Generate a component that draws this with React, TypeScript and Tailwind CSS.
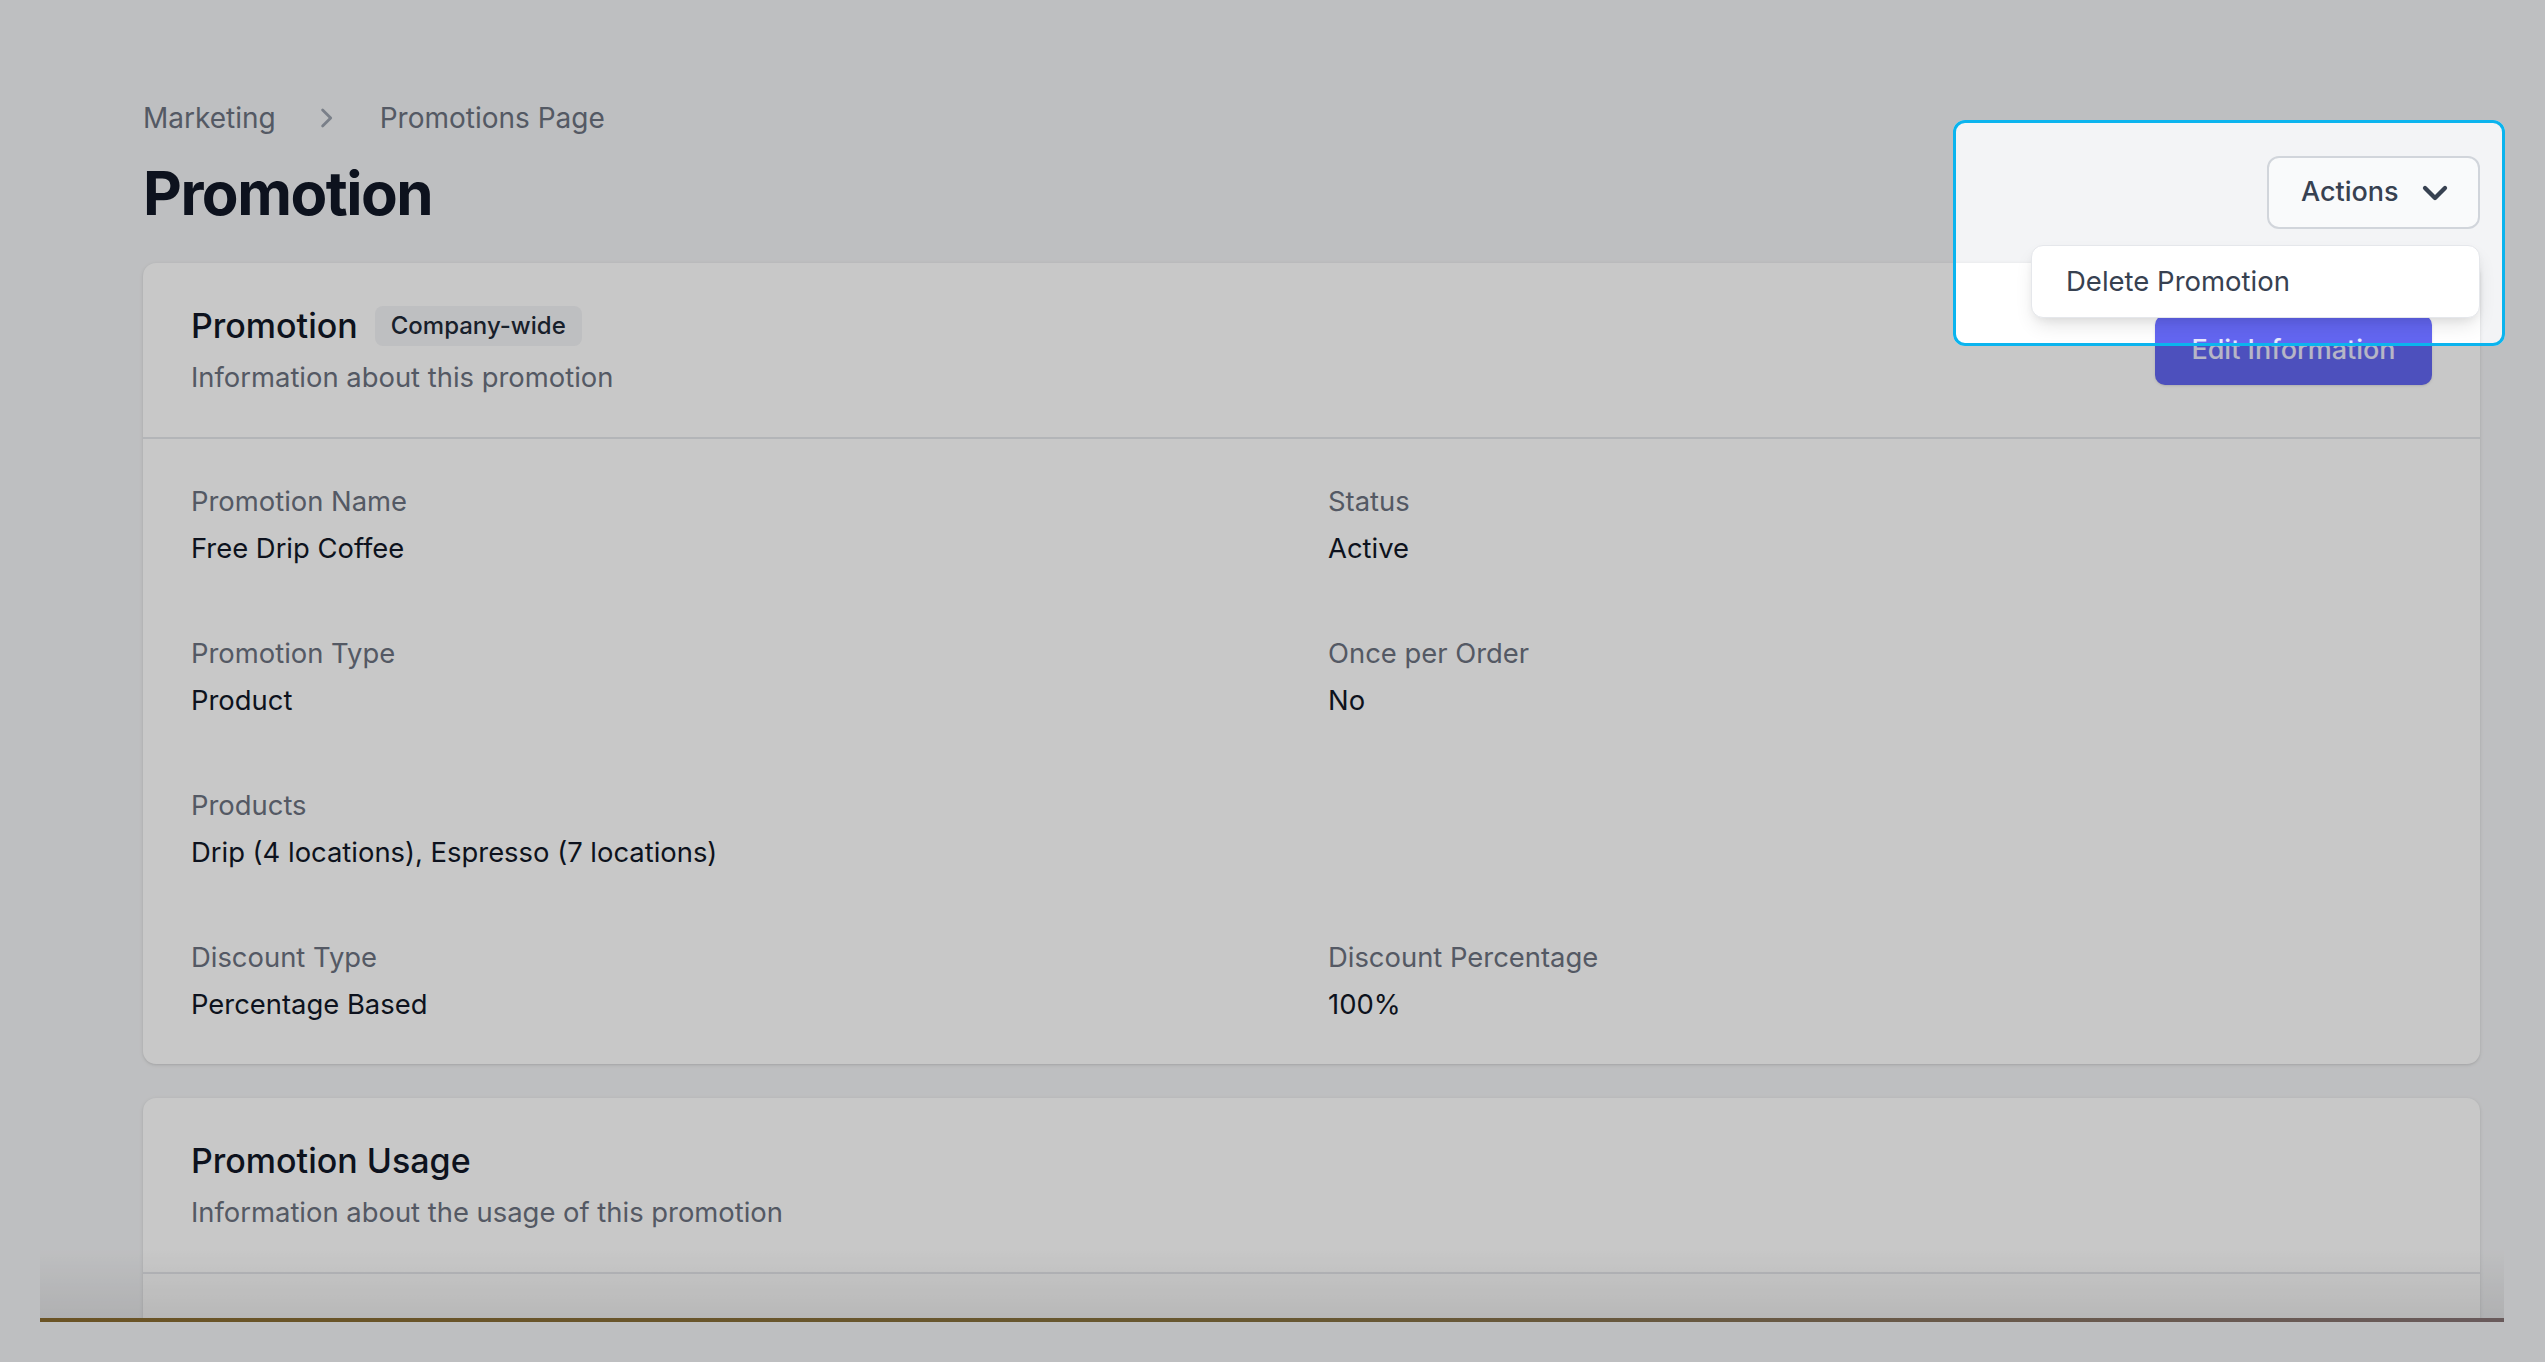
import React from "react";

function ChevronRight({ className }: { className?: string }) {
  return (
    <svg viewBox="0 0 20 20" fill="currentColor" className={className} aria-hidden="true">
      <path
        fillRule="evenodd"
        d="M8.22 5.22a.75.75 0 0 1 1.06 0l4.25 4.25a.75.75 0 0 1 0 1.06l-4.25 4.25a.75.75 0 0 1-1.06-1.06L11.94 10 8.22 6.28a.75.75 0 0 1 0-1.06Z"
        clipRule="evenodd"
      />
    </svg>
  );
}

function ChevronDown({ className }: { className?: string }) {
  return (
    <svg viewBox="0 0 24 24" fill="none" stroke="currentColor" strokeWidth={3.2} strokeLinecap="round" strokeLinejoin="round" className={className} aria-hidden="true">
      <path d="m19.5 8.25-7.5 7.5-7.5-7.5" />
    </svg>
  );
}

function Field({ label, value }: { label: string; value: string }) {
  return (
    <div className="flex flex-col">
      <div className="h-[42px] leading-[42px] text-[27.4px] text-[#6b7280]">{label}</div>
      <div className="mt-[5px] h-[42px] leading-[42px] text-[27.4px] text-[#111827]">{value}</div>
    </div>
  );
}

export default function App() {
  return (
    <div className="relative w-[2545px] h-[1362px] overflow-hidden bg-[#f3f4f6] font-['Inter','Liberation_Sans',sans-serif]">
      {/* browser window */}
      <div className="relative ml-[40px] w-[2464px] h-[1318px] overflow-hidden bg-[#f3f4f6]">
        <div className="pl-[103px] pr-[24px] pt-[97px]">
          {/* breadcrumb */}
          <div className="flex items-center h-[42px] text-[28px] text-[#6b7280]">
            <span>Marketing</span>
            <ChevronRight className="w-[38px] h-[38px] ml-[30px] mr-[36px] text-[#9ca3af]" />
            <span>Promotions Page</span>
          </div>

          {/* title row */}
          <div className="mt-[17px] h-[73px] flex items-center justify-between">
            <h1 className="text-[60px] leading-[68px] font-bold tracking-[-0.025em] text-[#111827]">Promotion</h1>
            <div className="relative">
              <button className="flex items-center w-[213px] h-[73px] pl-[32px] rounded-[12px] border-2 border-[#d1d5db] bg-[#f9fafb] text-[27px] font-medium text-[#374151]">
                <span>Actions</span>
                <ChevronDown className="ml-[20px] w-[32px] h-[32px] text-[#374151]" />
              </button>
              <div className="absolute right-0 top-[calc(100%+16px)] z-10 w-[449px] h-[73px] rounded-[12px] border border-[#e5e7eb] bg-white shadow-[0_10px_20px_-4px_rgba(0,0,0,0.12),0_4px_8px_-2px_rgba(0,0,0,0.06)] flex items-center pl-[34px] text-[27.5px] text-[#374151]">
                Delete Promotion
              </div>
            </div>
          </div>

          {/* Promotion card */}
          <div className="mt-[34px] rounded-[13px] bg-white shadow-[0_1px_4px_rgba(0,0,0,0.1),0_1px_2px_rgba(0,0,0,0.06)]">
            <div className="flex items-center justify-between px-[48px] py-[39px] border-b-2 border-[#e5e7eb]">
              <div>
                <div className="flex items-center h-[48px]">
                  <h2 className="text-[34px] leading-[48px] font-medium text-[#111827]">Promotion</h2>
                  <span className="ml-[17px] h-[40px] px-[16px] flex items-center rounded-[8px] bg-[#f3f4f6] text-[24px] font-medium text-[#1f2937]">
                    Company-wide
                  </span>
                </div>
                <p className="mt-[6px] h-[42px] leading-[42px] text-[27.4px] text-[#6b7280]">Information about this promotion</p>
              </div>
              <button className="w-[277px] h-[70px] rounded-[10px] bg-[#6366f1] text-[27px] font-medium text-white/85 shadow-sm">
                Edit Information
              </button>
            </div>
            <div className="px-[48px] pt-[41px] pb-[39px] grid grid-cols-2 gap-x-[33px] gap-y-[63px]">
              <Field label="Promotion Name" value="Free Drip Coffee" />
              <Field label="Status" value="Active" />
              <Field label="Promotion Type" value="Product" />
              <Field label="Once per Order" value="No" />
              <Field label="Products" value="Drip (4 locations), Espresso (7 locations)" />
              <div />
              <Field label="Discount Type" value="Percentage Based" />
              <Field label="Discount Percentage" value="100%" />
            </div>
          </div>

          {/* Promotion Usage card */}
          <div className="mt-[34px] rounded-[13px] bg-white shadow-[0_1px_4px_rgba(0,0,0,0.1),0_1px_2px_rgba(0,0,0,0.06)]">
            <div className="px-[48px] py-[39px] border-b-2 border-[#e5e7eb]">
              <h2 className="h-[48px] text-[34px] leading-[48px] font-medium text-[#111827]">Promotion Usage</h2>
              <p className="mt-[6px] h-[42px] leading-[42px] text-[27.4px] text-[#6b7280]">Information about the usage of this promotion</p>
            </div>
            <div className="h-[300px]" />
          </div>
        </div>

        {/* bottom vignette */}
        <div className="pointer-events-none absolute left-0 right-0 bottom-0 h-[70px] bg-gradient-to-b from-transparent to-[rgba(0,0,0,0.08)]" />
      </div>
      <div className="ml-[40px] w-[2464px] h-[4px] bg-gradient-to-r from-[#886a30] via-[#84703f] to-[#877375]" />

      {/* highlight with dimmed surroundings */}
      <div className="pointer-events-none absolute left-[1953px] top-[120px] w-[552px] h-[226px] rounded-[12px] border-[3px] border-[#0bb4ee] shadow-[0_0_0_4000px_rgba(0,0,0,0.215)] z-20" />
    </div>
  );
}
